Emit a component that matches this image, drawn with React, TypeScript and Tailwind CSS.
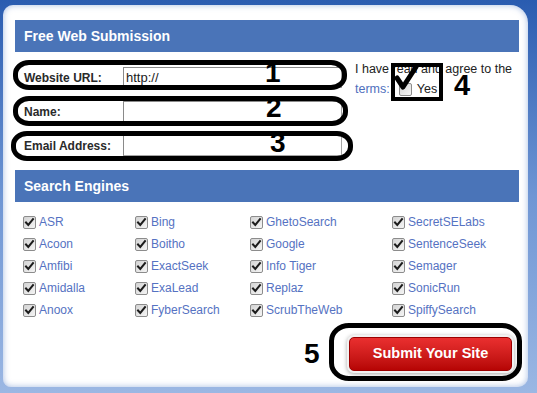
import React from "react";

const Check = ({ checked = true }: { checked?: boolean }) => (
  <svg width="13" height="13" viewBox="0 0 13 13" className="shrink-0">
    <defs>
      <linearGradient id="cbg" x1="0" y1="0" x2="1" y2="1">
        <stop offset="0" stopColor="#d2d2d2" />
        <stop offset="1" stopColor="#f6f6f6" />
      </linearGradient>
    </defs>
    <rect x="0.5" y="0.5" width="12" height="12" rx="1.5" fill="url(#cbg)" stroke="#8c8c8c" />
    {checked && (
      <path d="M3 6.5 L5.3 9 L10 3.2" fill="none" stroke="#1c1c1c" strokeWidth="2" strokeLinecap="square" />
    )}
  </svg>
);

const cols = [
  ["ASR", "Acoon", "Amfibi", "Amidalla", "Anoox"],
  ["Bing", "Boitho", "ExactSeek", "ExaLead", "FyberSearch"],
  ["GhetoSearch", "Google", "Info Tiger", "Replaz", "ScrubTheWeb"],
  ["SecretSELabs", "SentenceSeek", "Semager", "SonicRun", "SpiffySearch"],
];

const rows = ["Website URL:", "Name:", "Email Address:"];

export default function App() {
  return (
    <div className="relative w-[537px] h-[393px] overflow-hidden bg-gradient-to-b from-[#2a5cb0] via-[#6f96d4] to-[#9bb7e3] pt-[5px] pl-[3px] pr-[9px] pb-[6px] font-['Liberation_Sans',Arial,sans-serif]">
      <div className="h-full bg-white rounded-tl-[10px] rounded-tr-[18px] rounded-bl-[8px] rounded-br-[10px] shadow-[inset_0_0_6px_rgba(90,130,200,0.55)] pt-[15px] pl-[12px] pr-[9px]">
        <div className="w-[504px] h-[32px] bg-[#4a74b8] text-white font-bold text-[14px] pl-[9px] flex items-center">
          Free Web Submission
        </div>
        <div className="flex mt-[15px]">
          <div className="flex flex-col gap-[13px] w-[327px]">
            {rows.map((r, i) => (
              <div key={r} className="flex items-center h-[21px]">
                <div className="w-[108px] pl-[9px] text-[12px] font-bold text-[#2a2a2a]">{r}</div>
                <div className="w-[219px] h-[21px] border border-[#a5a5a5] border-t-[#8a8a8a] border-l-[#8a8a8a] bg-white text-[13px] text-[#1a1a1a] pl-[2px] flex items-center">
                  {i === 0 ? "http://" : ""}
                </div>
              </div>
            ))}
          </div>
          <div className="ml-[13px] -mt-[8px] text-[12.5px] text-[#222] leading-[20px]">
            <div>I have read and agree to the</div>
            <div className="flex items-center">
              <span className="text-[#4f6fbd]">terms:</span>
              <span className="ml-[9px] mr-[5px] flex"><Check checked={false} /></span>
              <span>Yes</span>
            </div>
          </div>
        </div>
        <div className="w-[504px] h-[32px] bg-[#4a74b8] text-white font-bold text-[14px] pl-[9px] flex items-center mt-[14px]">
          Search Engines
        </div>
        <div className="grid grid-cols-[112px_115px_142px_1fr] mt-[9px] pl-[8px] w-[504px]">
          {cols.map((c, ci) => (
            <div key={ci} className="flex flex-col">
              {c.map((n) => (
                <div key={n} className="h-[22px] flex items-center gap-[3px] text-[12px] text-[#5572c2]">
                  <Check />
                  <span>{n}</span>
                </div>
              ))}
            </div>
          ))}
        </div>
        <div className="flex justify-end w-[504px] pr-[7px] mt-[16px]">
          <button className="w-[163px] h-[34px] rounded-[5px] bg-gradient-to-b from-[#ea2f2f] to-[#b60404] border border-[#9c0000] text-white font-bold text-[14.5px] shadow-[0_0_0_2px_#f2f2f2,0_1px_4px_2px_rgba(0,0,0,0.35)]">
            Submit Your Site
          </button>
        </div>
      </div>

      {/* annotations */}
      <div className="absolute left-[13px] top-[60px] w-[334px] h-[30px] border-[5px] border-black rounded-[16px/14px]" />
      <div className="absolute left-[13px] top-[96px] w-[335px] h-[30px] border-[5px] border-black rounded-[16px/14px]" />
      <div className="absolute left-[11px] top-[131px] w-[342px] h-[30px] border-[5px] border-black rounded-[16px/14px]" />
      <div className="absolute left-[265px] top-[59px] text-[28px] font-bold text-black leading-none">1</div>
      <div className="absolute left-[266px] top-[94px] text-[28px] font-bold text-black leading-none">2</div>
      <div className="absolute left-[270px] top-[129px] text-[28px] font-bold text-black leading-none">3</div>
      <div className="absolute left-[391px] top-[63px] w-[52px] h-[38px] border-[4px] border-black" />
      <svg className="absolute left-[394px] top-[64px]" width="26" height="28" viewBox="0 0 26 28">
        <path d="M3 14 L9 23 L22 3" fill="none" stroke="#000" strokeWidth="5" strokeLinecap="round" strokeLinejoin="round" />
      </svg>
      <div className="absolute left-[454px] top-[71px] text-[29px] font-bold text-black leading-none">4</div>
      <div className="absolute left-[329px] top-[323px] w-[193px] h-[58px] border-[5px] border-black rounded-[20px/18px]" />
      <div className="absolute left-[304px] top-[340px] text-[28px] font-bold text-black leading-none">5</div>
    </div>
  );
}
